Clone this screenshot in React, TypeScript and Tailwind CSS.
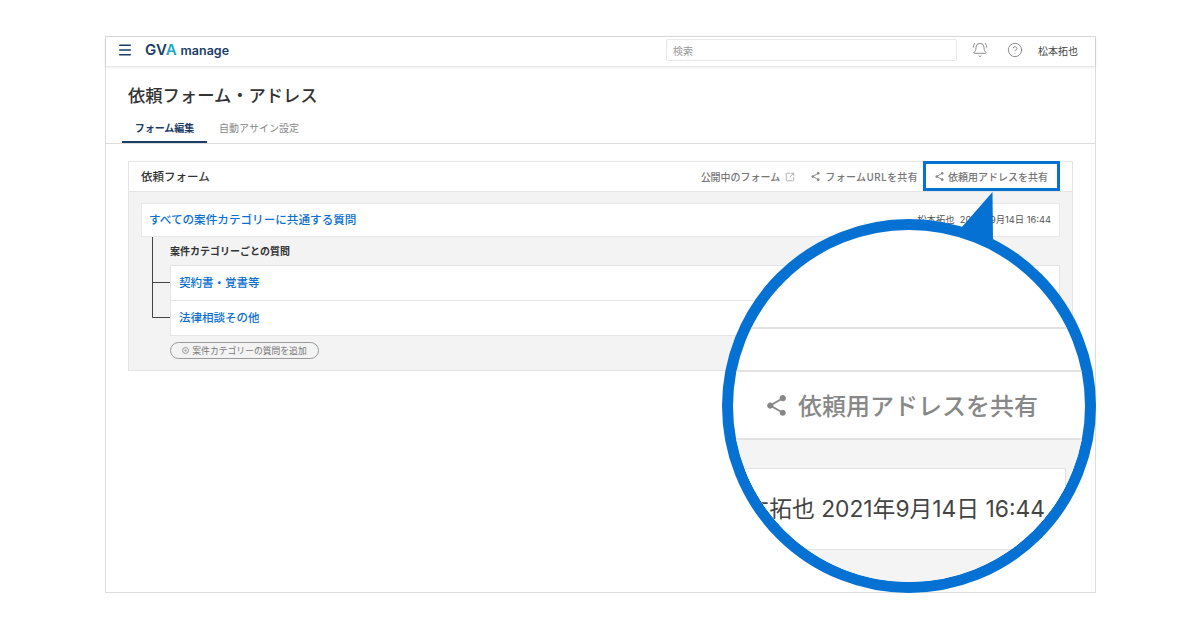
import React from 'react';
import { BellRing, CircleHelp, Menu, Plus, SquareArrowOutUpRight } from 'lucide-react';
import { MdShare } from 'react-icons/md';

const font = 'font-["Noto_Sans_CJK_JP","Noto_Sans",sans-serif]';
const dateFont = 'font-["Inter","Noto_Sans_CJK_JP",sans-serif]';

const ShareLink: React.FC<{ label: string; boxed?: boolean }> = ({ label, boxed }) => (
  <div
    className={`flex items-center text-[10px] font-medium text-[#777] ${
      boxed ? 'gap-[3px] h-[30px] w-[137px] -mt-px pr-[1px] justify-center border-[3px] border-[#0571d3]' : 'gap-[4px] tracking-[0.35px]'
    }`}
  >
    <MdShare className="w-[11px] h-[11px] text-[#888]" />
    <span>{label}</span>
  </div>
);

const QuestionRow: React.FC<{ label: string; last?: boolean }> = ({ label, last }) => (
  <div className={`flex items-center pl-[8px] bg-white ${last ? 'h-[34px]' : 'h-[35px] border-b border-[#e4e4e4]'}`}>
    <span className="text-[11.5px] font-medium text-[#0a6fd0]">{label}</span>
  </div>
);

const Magnifier: React.FC = () => (
  <>
    <svg className="absolute left-[950px] top-[190px] w-[50px] h-[55px]" viewBox="0 0 50 55">
      <polygon points="42.5,2 11,38 43,52" fill="#0571d3" />
    </svg>
    <div className="absolute left-[722px] top-[219px] w-[374px] h-[374px] rounded-full border-[11px] border-[#0571d3] bg-white overflow-hidden flex flex-col">
      <div className="h-[97px] shrink-0" />
      <div className="h-[43px] shrink-0 border-t-2 border-[#e2e2e2]" />
      <div className="h-[70px] shrink-0 border-t-2 border-b-2 border-[#e2e2e2] flex items-center pl-[31px] gap-[9px]">
        <MdShare className="w-[25px] h-[25px] text-[#888]" />
        <span className="text-[24px] font-medium text-[#888] whitespace-nowrap">依頼用アドレスを共有</span>
      </div>
      <div className="flex-1 bg-[#f4f4f4] pt-[28px] pr-[19px]">
        <div className={`h-[82px] bg-white border border-[#e2e2e2] rounded-[2px] flex items-center justify-end pr-[20px] text-[22.8px] text-[#444] whitespace-nowrap ${dateFont}`}>
          <span>松本拓也&nbsp;2021年9月14日 16:44</span>
        </div>
      </div>
    </div>
  </>
);

export default function App() {
  return (
    <div className={`relative w-[1200px] h-[630px] bg-white overflow-hidden pl-[105px] pt-[36px] ${font}`}>
      <div className="w-[991px] h-[557px] border border-[#dcdcdc] flex flex-col">
        {/* header */}
        <header className="h-[29px] shrink-0 flex items-center pl-[11px] pr-[16px] pb-[3px] bg-white shadow-[0_1px_3px_rgba(0,0,0,0.14)]">
          <Menu className="w-[16px] h-[16px] text-[#1c3d66]" strokeWidth={2.25} />
          <div className="ml-[12px] w-[83px] flex items-baseline gap-[4px] font-['Inter',sans-serif] text-[#1c3d66] font-semibold">
            <span className="text-[15px]">
              GV<span className="text-[#1aa6c4]">A</span>
            </span>
            <span className="text-[12.5px]">manage</span>
          </div>
          <div className="ml-[438px] w-[291px] h-[22px] flex items-center pl-[6px] border border-[#e8e8e8] rounded-[2px] text-[10px] text-[#999]">
            検索
          </div>
          <BellRing className="ml-[15px] w-[16px] h-[16px] text-[#777]" strokeWidth={1.25} />
          <CircleHelp className="ml-[19px] w-[16px] h-[16px] text-[#777]" strokeWidth={1.25} />
          <span className="ml-[15px] text-[10px] text-[#444]">松本拓也</span>
        </header>

        {/* title and tabs */}
        <div className="h-[78px] shrink-0 border-b border-[#dcdcdc] pl-[16px] flex flex-col">
          <h1 className="mt-[16px] ml-[6px] text-[17.3px] leading-[26px] font-medium text-[#333]">依頼フォーム・アドレス</h1>
          <div className="mt-[auto] flex text-[10px]">
            <div className="w-[85px] h-[29px] flex items-center justify-center border-b-2 border-[#1c3d66] font-bold text-[#1c3d66]">
              フォーム編集
            </div>
            <div className="ml-[12px] h-[29px] pb-[2px] flex items-center text-[#888]">自動アサイン設定</div>
          </div>
        </div>

        {/* form panel */}
        <div className="mt-[17px] ml-[22px] w-[945px] h-[210px] border border-[#e4e4e4] flex flex-col">
          <div className="h-[30px] shrink-0 bg-white flex items-center pl-[12px] pr-[12px] border-b border-[#e4e4e4]">
            <span className="text-[11.5px] font-medium text-[#333]">依頼フォーム</span>
            <div className="ml-auto flex items-center">
              <span className="text-[10px] font-medium text-[#777]">公開中のフォーム</span>
              <SquareArrowOutUpRight className="ml-[5px] w-[10px] h-[10px] text-[#888]" strokeWidth={1.5} />
              <div className="ml-[15px]">
                <ShareLink label="フォームURLを共有" />
              </div>
              <div className="ml-[5px]">
                <ShareLink label="依頼用アドレスを共有" boxed />
              </div>
            </div>
          </div>
          <div className="flex-1 bg-[#f3f3f3] px-[12px] pt-[11px]">
            <div className="h-[34px] bg-white border border-[#e8e8e8] flex items-center justify-between pl-[7px] pr-[8px]">
              <span className="text-[11.6px] font-medium text-[#0a6fd0]">すべての案件カテゴリーに共通する質問</span>
              <span className={`text-[9.3px] text-[#555] whitespace-nowrap ${dateFont}`}>松本拓也&nbsp;&nbsp;2021年9月14日 16:44</span>
            </div>
            <div className="flex">
              <svg className="w-[29px] h-[98px] shrink-0" viewBox="0 0 29 98">
                <path d="M11.5 0V80.5H29M11.5 45.5H29" fill="none" stroke="#444" strokeWidth="1" />
              </svg>
              <div className="flex-1">
                <div className="h-[28px] pb-[2px] flex items-center text-[10px] font-bold text-[#333]">案件カテゴリーごとの質問</div>
                <div className="border border-[#e4e4e4] bg-white">
                  <QuestionRow label="契約書・覚書等" />
                  <QuestionRow label="法律相談その他" last />
                </div>
                <div className="mt-[6px] w-[149px] h-[17px] rounded-full border border-[#999] flex items-center justify-center gap-[3px] text-[8.8px] text-[#777]">
                  <span className="w-[7px] h-[7px] rounded-full border border-[#999] flex items-center justify-center">
                    <Plus className="w-[5px] h-[5px]" />
                  </span>
                  案件カテゴリーの質問を追加
                </div>
              </div>
            </div>
          </div>
        </div>
      </div>

      <Magnifier />
    </div>
  );
}
